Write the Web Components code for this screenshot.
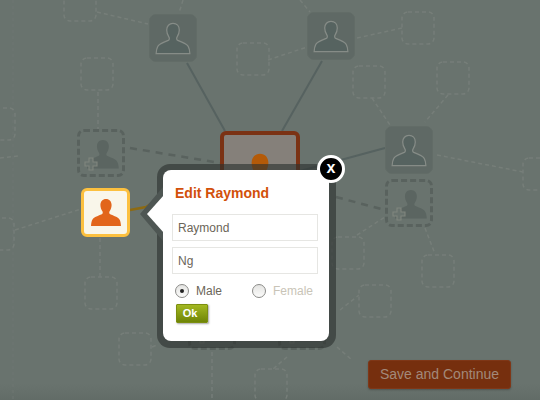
<!DOCTYPE html>
<html>
<head>
<meta charset="utf-8">
<title>Edit Raymond</title>
<style>
    html, body { margin: 0; padding: 0; }
    body { width: 540px; height: 400px; overflow: hidden; font-family: "Liberation Sans", Arial, sans-serif; }
</style>
</head>
<body>
<graph-canvas>
    <person-node kind="solid" x="149" y="14"></person-node>
    <person-node kind="solid" x="307" y="12"></person-node>
    <person-node kind="solid" x="385" y="126"></person-node>
    <person-node kind="add" x="77" y="129"></person-node>
    <person-node kind="add" x="385" y="179"></person-node>
    <person-node kind="add" x="188" y="302"></person-node>
    <person-node kind="add" x="278" y="302"></person-node>
    <person-node kind="focus" x="220" y="131"></person-node>
    <person-node kind="active" x="81" y="188"></person-node>

    <edit-dialog x="157" y="164" heading="Edit Raymond">
        <text-field value="Raymond"></text-field>
        <text-field value="Ng"></text-field>
        <div slot="gender">
            <radio-option checked>Male</radio-option>
            <radio-option muted>Female</radio-option>
        </div>
        <ok-button slot="action">Ok</ok-button>
    </edit-dialog>

    <save-button>Save and Continue</save-button>
</graph-canvas>

<script>
const PERSON_PATH = 'M15 0c3.4 0 5.6 2.6 5.6 6 0 2.6-.9 4.6-2 6.2-.6.9-.5 2.4.6 3 3.400 1.600 7.600 2.600 9.300 5.300.8 1.300 1.300 3.300 1.500 6.500H0c.2-3.200.7-5.200 1.500-6.500 1.700-2.700 5.900-3.700 9.300-5.300 1.100-.6 1.200-2.100.6-3-1.100-1.600-2-3.600-2-6.200C9.400 2.600 11.600 0 15 0z';

class GraphCanvas extends HTMLElement {
    constructor() {
        super();
        this.attachShadow({ mode: 'open' });
        this.shadowRoot.innerHTML = this.getTemplate();
    }
    getTemplate() {
        return `
            <svg class="edges" width="540" height="400" viewBox="0 0 540 400">
                <path d="M13 0 L13 400" fill="none" stroke="#6e7773" stroke-width="1" stroke-dasharray="3 3"/>
                ${this.getTiles()}
                <g fill="none" stroke="#767e79" stroke-width="1.500" stroke-dasharray="4 3">
                    <path d="M0 20 L18 25" opacity="0"/>
                    <path d="M97 12 L148 24"/>
                    <path d="M183 0 L179 13"/>
                    <path d="M268 60 L307 47"/>
                    <path d="M300 0 L310 12"/>
                    <path d="M98 92 L98 130"/>
                    <path d="M357 38 L402 28"/>
                    <path d="M372 98 L390 125"/>
                    <path d="M448 95 L425 122"/>
                    <path d="M437 155 L523 172"/>
                    <path d="M357 235 L385 217"/>
                    <path d="M425 228 L435 254"/>
                    <path d="M0 158 L18 156"/>
                    <path d="M15 230 L81 209"/>
                    <path d="M100 238 L100 277"/>
                    <path d="M340 310 L359 295"/>
                    <path d="M337 347 L352 360"/>
                    <path d="M212 352 L212 400"/>
                    <path d="M287 357 L273 369"/>
                    <path d="M152 347 L157 345"/>
                </g>
                <g fill="none" stroke="#566260" stroke-width="2">
                    <path d="M187 63 L225 131"/>
                    <path d="M322 61 L282 131"/>
                    <path d="M300 171 L385 148"/>
                </g>
                <g fill="none" stroke="#59625e" stroke-width="2.500" stroke-dasharray="7 6">
                    <path d="M130 148 L220 163"/>
                    <path d="M336 197 L385 210"/>
                </g>
                <path d="M130 210 L146 207 L160 198" fill="none" stroke="#8d6a12" stroke-width="2.500"/>
            </svg>
            <slot></slot>
            ${this.getStyles()}
        `;
    }
    getTiles() {
        const tiles = [[64,-11],[81,58],[237,43],[402,12],[353,66],[437,62],[523,158],[-17,108],[-18,218],[85,277],[119,333],[332,237],[359,285],[422,255],[255,369]];
        return tiles.map(([x, y]) => `<rect x="${x}" y="${y}" width="32" height="32" rx="6" fill="none" stroke="#767e79" stroke-width="1.500" stroke-dasharray="4 3"/>`).join('');
    }
    getStyles() {
        return `
            <style>
                :host {
                    display: block;
                    position: relative;
                    width: 540px;
                    height: 400px;
                    overflow: hidden;
                    background: linear-gradient(#69736e 96%, #626c67);
                }
                .edges {
                    position: absolute;
                    left: 0;
                    top: 0;
                }
            </style>
        `;
    }
}

class PersonNode extends HTMLElement {
    constructor() {
        super();
        this.attachShadow({ mode: 'open' });
    }
    connectedCallback() {
        this.style.left = this.getAttribute('x') + 'px';
        this.style.top = this.getAttribute('y') + 'px';
        const kind = this.getAttribute('kind');
        this.shadowRoot.innerHTML = `
            <div class="tile ${kind}">
                <svg class="icon" viewBox="-1 -1 32 29">
                    <path d="${PERSON_PATH}" ${kind === 'add' ? 'transform="translate(1 0) scale(1.060)"' : ''}></path>
                    ${kind === 'add' ? '<path class="plus" d="M3 18h4v4h4v4H7v4H3v-4h-4v-4h4z"></path>' : ''}
                </svg>
            </div>
            ${this.getStyles()}
        `;
    }
    getStyles() {
        return `
            <style>
                :host { display: block; position: absolute; }
                .tile {
                    box-sizing: border-box;
                    width: 48px;
                    height: 48px;
                    border-radius: 7px;
                    display: flex;
                    align-items: center;
                    justify-content: center;
                }
                .icon { width: 32px; height: 29px; display: block; overflow: visible; }
                .solid { background: #5f6965; border: 1px solid #626c67; }
                .solid .icon { width: 36px; height: 33px; }
                .solid path { fill: #566360; stroke: #868c87; stroke-width: 1.100; }
                .add { border: 3px dashed #59625e; }
                .add path { fill: #5b6561; }
                .add .plus { fill: #69736e; stroke: #80867f; stroke-width: 1.100; }
                .focus {
                    width: 80px;
                    height: 78px;
                    border: 4px solid #7b3214;
                    border-radius: 6px;
                    background: #85807a;
                    align-items: flex-start;
                    padding-top: 17px;
                }
                .focus .icon { width: 48px; height: 44px; }
                .focus path { fill: #b45a08; }
                .active {
                    width: 49px;
                    height: 49px;
                    border: 3px solid #fcc03f;
                    border-radius: 6px;
                    background: #f9f6ea;
                }
                .active path { fill: #e2651b; }
            </style>
        `;
    }
}

class EditDialog extends HTMLElement {
    constructor() {
        super();
        this.attachShadow({ mode: 'open' });
    }
    connectedCallback() {
        this.style.left = this.getAttribute('x') + 'px';
        this.style.top = this.getAttribute('y') + 'px';
        this.shadowRoot.innerHTML = `
            <div class="frame">
                <div class="panel">
                    <h2>${this.getAttribute('heading')}</h2>
                    <div class="fields"><slot></slot></div>
                    <slot name="gender"></slot>
                    <slot name="action"></slot>
                </div>
            </div>
            <svg class="pointer" width="24" height="60" viewBox="0 0 24 60">
                <path d="M23 4 L0 31 L23 58 Z" fill="#4e5653"></path>
                <path d="M24 12 L7 31 L24 50 Z" fill="#fff"></path>
            </svg>
            <div class="close">x</div>
            ${this.getStyles()}
        `;
    }
    getStyles() {
        return `
            <style>
                :host {
                    display: block;
                    position: absolute;
                    width: 179px;
                    height: 184px;
                }
                .frame {
                    box-sizing: border-box;
                    width: 179px;
                    height: 184px;
                    padding: 6px 7px 7px 6px;
                    border-radius: 13px;
                    background: rgba(43, 48, 46, .62);
                }
                .panel {
                    box-sizing: border-box;
                    height: 171px;
                    padding: 15px 11px 0 9px;
                    background: #fff;
                    border-radius: 8px;
                }
                h2 {
                    margin: 0 0 12px 3px;
                    font: bold 14px/17px "Liberation Sans", Arial, sans-serif;
                    color: #d2500a;
                }
                .fields {
                    display: flex;
                    flex-direction: column;
                    gap: 6px;
                }
                .pointer {
                    position: absolute;
                    left: -17px;
                    top: 19px;
                }
                .close {
                    position: absolute;
                    left: 160px;
                    top: -9px;
                    box-sizing: border-box;
                    width: 28px;
                    height: 28px;
                    border: 3px solid #fff;
                    border-radius: 50%;
                    background: #000;
                    color: #fff;
                    font: bold 16px/19px "Liberation Sans", Arial, sans-serif;
                    text-align: center;
                }
                ::slotted([slot=gender]) {
                    display: grid;
                    grid-template-columns: 77px auto;
                    margin: 10px 0 0 3px;
                }
                ::slotted([slot=action]) {
                    margin: 6px 0 0 4px;
                }
            </style>
        `;
    }
}

class TextField extends HTMLElement {
    constructor() {
        super();
        this.attachShadow({ mode: 'open' });
    }
    connectedCallback() {
        this.shadowRoot.innerHTML = `
            <div class="box">${this.getAttribute('value')}</div>
            <style>
                :host { display: block; }
                .box {
                    box-sizing: border-box;
                    height: 27px;
                    width: 146px;
                    padding-left: 5px;
                    border: 1px solid #e6e6e3;
                    font: 12px/26px "Liberation Sans", Arial, sans-serif;
                    color: #6b6558;
                }
            </style>
        `;
    }
}

class RadioOption extends HTMLElement {
    constructor() {
        super();
        this.attachShadow({ mode: 'open' });
        this.shadowRoot.innerHTML = `
            <span class="dot"></span><slot></slot>
            <style>
                :host {
                    display: flex;
                    align-items: center;
                    gap: 7px;
                    font: 12px/14px "Liberation Sans", Arial, sans-serif;
                    color: #6b6558;
                }
                :host([muted]) { color: #c9c4b7; }
                .dot {
                    box-sizing: border-box;
                    width: 14px;
                    height: 14px;
                    border: 1px solid #8b8b88;
                    border-radius: 50%;
                    background: linear-gradient(#e4e4e2, #fbfbfa);
                    display: flex;
                    align-items: center;
                    justify-content: center;
                }
                :host([checked]) .dot::after {
                    content: "";
                    width: 4px;
                    height: 4px;
                    border-radius: 50%;
                    background: #222;
                }
            </style>
        `;
    }
}

class OkButton extends HTMLElement {
    constructor() {
        super();
        this.attachShadow({ mode: 'open' });
        this.shadowRoot.innerHTML = `
            <slot></slot>
            <style>
                :host {
                    display: block;
                    box-sizing: border-box;
                    width: 32px;
                    height: 19px;
                    padding-right: 4px;
                    border: 1px solid #7c8f10;
                    border-radius: 1px;
                    background: linear-gradient(#a3b821, #6f8506);
                    box-shadow: 1px 1px 2px rgba(0, 0, 0, .35);
                    color: #fff;
                    font: bold 11px/17px "Liberation Sans", Arial, sans-serif;
                    text-align: center;
                }
            </style>
        `;
    }
}

class SaveButton extends HTMLElement {
    constructor() {
        super();
        this.attachShadow({ mode: 'open' });
        this.shadowRoot.innerHTML = `
            <slot></slot>
            <style>
                :host {
                    display: block;
                    position: absolute;
                    left: 368px;
                    top: 360px;
                    box-sizing: border-box;
                    width: 143px;
                    height: 29px;
                    border: 1px solid #7f3717;
                    border-radius: 3px;
                    background: #762f0e;
                    box-shadow: 0 1px 2px rgba(0, 0, 0, .25);
                    color: #a2897a;
                    font: 14px/27px "Liberation Sans", Arial, sans-serif;
                    text-align: center;
                }
            </style>
        `;
    }
}

customElements.define('graph-canvas', GraphCanvas);
customElements.define('person-node', PersonNode);
customElements.define('edit-dialog', EditDialog);
customElements.define('text-field', TextField);
customElements.define('radio-option', RadioOption);
customElements.define('ok-button', OkButton);
customElements.define('save-button', SaveButton);
</script>
</body>
</html>
